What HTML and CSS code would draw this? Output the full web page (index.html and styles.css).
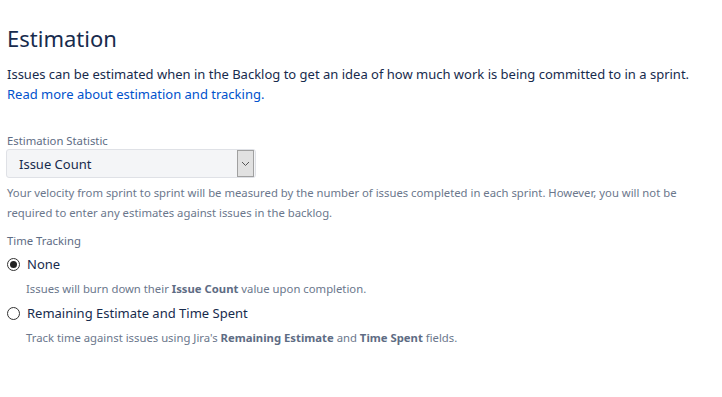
FILE: index.html
```html
<!DOCTYPE html>
<html lang="en">
<head>
  <meta charset="UTF-8" />
  <title>Estimation</title>
  <link rel="stylesheet" href="styles.css">
</head>
<body>
  <div class="page">
    <h1 class="title">Estimation</h1>
    <p class="intro">
      Issues can be estimated when in the Backlog to get an idea of how much work is being committed to in a sprint.<br>
      <a href="#" class="link">Read more about estimation and tracking.</a>
    </p>

    <div class="field">
      <label class="field-label">Estimation Statistic</label>
      <div class="select">
        <span class="select-value">Issue Count</span>
        <span class="select-btn">
          <svg width="9" height="6" viewBox="0 0 9 6"><path d="M1 1 L4.5 4.5 L8 1" fill="none" stroke="#555" stroke-width="1"/></svg>
        </span>
      </div>
      <p class="help">Your velocity from sprint to sprint will be measured by the number of issues completed in each sprint. However, you will not be required to enter any estimates against issues in the backlog.</p>
    </div>

    <div class="field">
      <label class="field-label">Time Tracking</label>
      <div class="radio-row first">
        <span class="radio checked"></span>
        <span class="radio-text">None</span>
      </div>
      <p class="radio-help">Issues will burn down their <b>Issue Count</b> value upon completion.</p>
      <div class="radio-row">
        <span class="radio"></span>
        <span class="radio-text">Remaining Estimate and Time Spent</span>
      </div>
      <p class="radio-help">Track time against issues using Jira's <b>Remaining Estimate</b> and <b>Time Spent</b> fields.</p>
    </div>
  </div>
</body>
</html>
```

FILE: styles.css
```css
:root {
  --text: #172b4d;
  --subtle: #6b778c;
  --label: #5e6c84;
  --link: #0052cc;
}

body {
  margin: 0;
  font-family: 'Noto Sans', 'Open Sans', sans-serif;
  color: var(--text);
  background: #fff;
}

.page {
  padding: 22px 7px 0;
}

.title {
  margin: 0;
  font-size: 22px;
  font-weight: 400;
  line-height: 32px;
}

.intro {
  margin: 10px 0 0;
  font-size: 13px;
  line-height: 20px;
}

.link {
  color: var(--link);
  text-decoration: none;
}

.field {
  margin-top: 29px;
}

.field + .field {
  margin-top: 10px;
}

.field-label {
  display: block;
  font-size: 11.3px;
  line-height: 16px;
  color: var(--label);
}

.select {
  display: flex;
  align-items: center;
  width: 248px;
  height: 27px;
  margin-left: -1px;
  background: #f4f5f7;
  border: 1px solid #dfe1e6;
  border-radius: 3px;
}

.select-value {
  flex: 1;
  padding-left: 12px;
  font-size: 13px;
}

.select-btn {
  display: flex;
  align-items: center;
  justify-content: center;
  width: 15px;
  height: 25px;
  margin-right: 1px;
  background: #e1e1e1;
  border: 1px solid #a0a0a0;
}

.help {
  margin: 5px 0 0;
  font-size: 11.3px;
  line-height: 20px;
  color: var(--subtle);
}

.radio-row {
  display: flex;
  align-items: center;
  height: 24px;
  margin-top: 2px;
}

.radio-row.first {
  margin-top: 3px;
}

.radio {
  width: 11px;
  height: 11px;
  border: 1px solid #333;
  border-radius: 50%;
  position: relative;
}

.radio.checked::after {
  content: '';
  position: absolute;
  left: 2px;
  top: 2px;
  width: 7px;
  height: 7px;
  border-radius: 50%;
  background: #222;
}

.radio-text {
  margin-left: 7px;
  font-size: 13px;
}

.radio-help {
  margin: 3px 0 0 19px;
  font-size: 11.3px;
  line-height: 20px;
  color: var(--subtle);
}

.radio-help b {
  color: var(--label);
}
```
